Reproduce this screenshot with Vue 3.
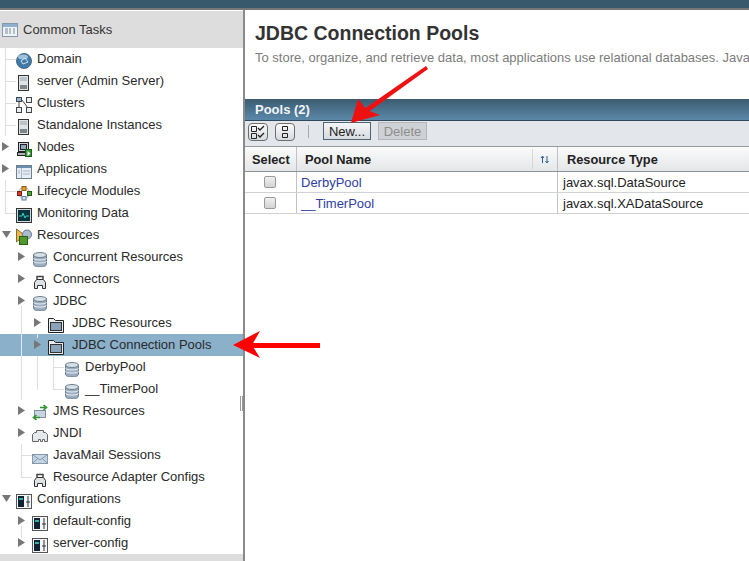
<template>
  <div class="page">
    <div class="topbar"></div>
    <div class="main">
      <aside class="side">
        <div class="side-head">
          <svg class="head-icon" width="16" height="16" viewBox="0 0 16 16"><rect x=".5" y="1.500" width="15" height="13" fill="#eef3f8" stroke="#8398ad"/><rect x="1" y="2" width="14" height="3" fill="#8fb0cf"/><path d="M3 7h3M3 9h3M3 11h3M7 7h2M7 9h2M7 11h2M11 7h2M11 9h2M11 11h2" stroke="#7e8c99"/></svg>
          <span>Common Tasks</span>
        </div>
        <div class="tree">
          <div v-for="r in rows" :key="r.t" class="row" :class="{ sel: r.sel, wide: r.i === 'folder' }">
            <i v-for="(l, i) in r.v" :key="i" class="vline" :style="{ left: l[0] + 'px', top: l[1] + 'px', height: l[2] + 'px' }"></i>
            <i v-if="r.stub !== undefined" class="hline" :style="{ left: r.stub + 'px' }"></i>
            <span class="cell" :style="{ paddingLeft: 16 * r.lv + 'px' }">
              <span class="tw">
                <svg v-if="r.a === 'r'" width="7" height="9" viewBox="0 0 7 9"><path d="M0 0l7 4.500-7 4.500z" fill="#777"/></svg>
                <svg v-if="r.a === 'd'" width="9" height="7" viewBox="0 0 9 7"><path d="M0 0h9l-4.500 7z" fill="#777"/></svg>
              </span>
              <svg class="ic" width="16" height="17" viewBox="0 0 16 17">
                <template v-if="r.i === 'globe'">
                  <circle cx="8" cy="9" r="7.500" fill="#3f7aa8"/><circle cx="8" cy="9" r="7.500" fill="none" stroke="#4b6a85"/><ellipse cx="7" cy="5" rx="5" ry="2.500" fill="#9dc0dc"/><path d="M5 9l4-3 3 4-5 2z" fill="none" stroke="#cfe0ee"/>
                </template>
                <template v-if="r.i === 'server'">
                  <rect x="2.500" y="1.500" width="10" height="15" fill="#dfe3e6" stroke="#333"/><path d="M4 4h7M4 6h7" stroke="#99a0a6"/><rect x="4" y="11" width="7" height="4" fill="#7d848a"/>
                </template>
                <template v-if="r.i === 'cluster'">
                  <g fill="#e8edf2" stroke="#444"><rect x=".5" y="1.500" width="5" height="4" fill="#8fb5d8"/><rect x="10.500" y="1.500" width="5" height="5"/><rect x=".5" y="11.500" width="5" height="5"/><rect x="10.500" y="11.500" width="5" height="5"/></g><path d="M3 6v5M6 4l6 8" stroke="#444" fill="none"/>
                </template>
                <template v-if="r.i === 'node'">
                  <rect x="2.500" y="2.500" width="10" height="9" fill="#ccd3d8" stroke="#222"/><rect x="4.500" y="4.500" width="6" height="5" fill="#8ca6bb" stroke="#222"/><rect x="1.500" y="12.500" width="9" height="3" fill="#aab2b8" stroke="#222"/><rect x="9.500" y="9.500" width="6" height="7" fill="#3d9a3d" stroke="#1c5f1c"/><path d="M11.500 11l3 2.500-3 2.500z" fill="#fff"/>
                </template>
                <template v-if="r.i === 'app'">
                  <rect x=".5" y="3.500" width="15" height="13" fill="#e6edf4" stroke="#6d7f8f"/><rect x="1" y="4" width="14" height="2" fill="#6b8fb0"/><path d="M5.500 6v10M2 9h2M2 11h2M7 9h7M7 12h7" stroke="#a5b7c7"/>
                </template>
                <template v-if="r.i === 'life'">
                  <circle cx="8" cy="9" r="5.500" fill="none" stroke="#9aa7b3"/><rect x="6" y="2.500" width="4" height="4" fill="#e8a02c" stroke="#8a5c10"/><rect x="1.500" y="7.500" width="4" height="4" fill="#d63a2a" stroke="#7c1b12"/><rect x="11.500" y="7.500" width="4" height="4" fill="#4ea03f" stroke="#25591c"/><rect x="6" y="12.500" width="4" height="3.500" fill="#cfe0ee" stroke="#5f7f9c"/>
                </template>
                <template v-if="r.i === 'mon'">
                  <rect x=".5" y="2.500" width="15" height="14" fill="#d5d9dc" stroke="#333"/><rect x="2" y="4" width="12" height="11" fill="#06343f"/><path d="M3 10h3l1-3 2 5 1-2h3" fill="none" stroke="#33d6c6"/>
                </template>
                <template v-if="r.i === 'res'">
                  <path d="M.5 1v13l8-7z" fill="#e9b64f" stroke="#8c6a20"/><circle cx="11" cy="6.500" r="4.500" fill="#a9bccd" stroke="#5f7487"/><rect x="3.500" y="8.500" width="8" height="8" fill="#4f9a2e" stroke="#2a5f15"/>
                </template>
                <template v-if="r.i === 'db'">
                  <path d="M1.500 5v9.500c0 1.300 2.900 2.300 6.500 2.300s6.500-1 6.500-2.300V5z" fill="#9badbe" stroke="#6d7f90"/><ellipse cx="8" cy="5" rx="6.500" ry="2.500" fill="#d7dfe6" stroke="#6d7f90"/><path d="M1.500 8.500c1 2 12 2 13 0M1.500 11.500c1 2 12 2 13 0" fill="none" stroke="#eef2f5"/>
                </template>
                <template v-if="r.i === 'conn'">
                  <path d="M5 7V4.500h6V7" fill="none" stroke="#444" stroke-width="1.500"/><path d="M2.500 16.500v-6l2-3h7l2 3v6h-3v-3h-5v3z" fill="#dfe3e6" stroke="#333"/>
                </template>
                <template v-if="r.i === 'folder'">
                  <path d="M.5 16.500v-14h5l2 2h8v12z" fill="#e9eef2" stroke="#222"/><rect x="2.500" y="6.500" width="11" height="8" fill="#8aa3b8" stroke="#333"/>
                </template>
                <template v-if="r.i === 'jms'">
                  <rect x="2.500" y="6.500" width="11" height="7" fill="#c9d6e2" stroke="#7f93a6"/><path d="M8 3.500h5M11.500 1l3 2.500-3 2.500" fill="none" stroke="#2e8f2e" stroke-width="1.600"/><path d="M8 13.500H3M4.500 11l-3 2.500 3 2.500" fill="none" stroke="#2e8f2e" stroke-width="1.600"/>
                </template>
                <template v-if="r.i === 'jndi'">
                  <path d="M.5 15.500v-7l2-2h2v-2h7v2h2l2 2v7h-3v-2h-2v2h-2v-2h-2v2z" fill="#e6e9ec" stroke="#666"/>
                </template>
                <template v-if="r.i === 'mail'">
                  <rect x=".5" y="6.500" width="15" height="9" fill="#c5d5e3" stroke="#8599ab"/><path d="M1 7l7 5 7-5M1 15l5-5M15 15l-5-5" fill="none" stroke="#8599ab"/>
                </template>
                <template v-if="r.i === 'cfg'">
                  <rect x=".5" y="2.500" width="15" height="14" fill="#f4f5f6" stroke="#555"/><rect x="2" y="4" width="6" height="11" fill="#123"/><rect x="3" y="6" width="4" height="2" fill="#2bb5a8"/><path d="M12 4v11M10 10h4" stroke="#333"/>
                </template>
              </svg>
              <span class="label">{{ r.t }}</span>
            </span>
          </div>
        </div>
        <div class="side-foot"></div>
        <div class="grip"></div>
      </aside>
      <main class="content">
        <h1>JDBC Connection Pools</h1>
        <p class="intro">To store, organize, and retrieve data, most applications use relational databases. Java</p>
        <section class="panel">
          <div class="panel-title">Pools (2)</div>
          <div class="toolbar">
            <button class="tb">
              <svg width="16" height="16" viewBox="0 0 16 16"><path d="M1.500 2.500h5v5h-5zM1.500 9.500h5v5h-5z" fill="none" stroke="#222"/><path d="M8 4l2 2 4-4M8 11l2 2 4-4" fill="none" stroke="#222" stroke-width="1.300"/></svg>
            </button>
            <button class="tb">
              <svg width="10" height="16" viewBox="0 0 10 16"><path d="M2.500 2.500h5v4h-5zM2.500 9.500h5v4h-5z" fill="none" stroke="#222"/></svg>
            </button>
            <span class="sep"></span>
            <button class="btn">New...</button>
            <button class="btn off">Delete</button>
          </div>
          <div class="table">
            <div class="tr thead">
              <div class="c c1 b">Select</div>
              <div class="c c2 b">
                <span>Pool Name</span>
                <span class="sort">
                  <svg width="10" height="9" viewBox="0 0 10 9"><path d="M2.500 8V2M1 3l1.500-2L4 3M7 1v6M5.500 6L7 8l1.500-2" fill="none" stroke="#2d5f94"/></svg>
                </span>
              </div>
              <div class="c c3 b">Resource Type</div>
            </div>
            <div v-for="p in pools" :key="p.n" class="tr">
              <div class="c c1 mid"><span class="check"></span></div>
              <div class="c c2 link">{{ p.n }}</div>
              <div class="c c3">{{ p.t }}</div>
            </div>
          </div>
        </section>
      </main>
    </div>
    <svg class="arrows" width="749" height="561" viewBox="0 0 749 561">
      <path d="M426 66L428 69 367 113 364 109z" fill="#ee1111"/>
      <path d="M351 123L358 99 367 110 380 115z" fill="#ee1111"/>
      <path d="M251 343H320V348H251z" fill="#ff0000"/>
      <path d="M233 345L260 331 252 345 260 358z" fill="#ff0000"/>
    </svg>
  </div>
</template>

<script setup>
const rows = [
  { t: 'Domain', lv: 0, i: 'globe', stub: 5, v: [[5, 0, 22]] },
  { t: 'server (Admin Server)', lv: 0, i: 'server', stub: 5, v: [[5, 0, 22]] },
  { t: 'Clusters', lv: 0, i: 'cluster', stub: 5, v: [[5, 0, 22]] },
  { t: 'Standalone Instances', lv: 0, i: 'server', stub: 5, v: [[5, 0, 22]] },
  { t: 'Nodes', lv: 0, i: 'node', a: 'r' },
  { t: 'Applications', lv: 0, i: 'app', a: 'r' },
  { t: 'Lifecycle Modules', lv: 0, i: 'life', stub: 5, v: [[5, 0, 22]] },
  { t: 'Monitoring Data', lv: 0, i: 'mon', stub: 5, v: [[5, 0, 12]] },
  { t: 'Resources', lv: 0, i: 'res', a: 'd' },
  { t: 'Concurrent Resources', lv: 1, i: 'db', a: 'r' },
  { t: 'Connectors', lv: 1, i: 'conn', a: 'r' },
  { t: 'JDBC', lv: 1, i: 'db', a: 'r', v: [[21, 16, 6]] },
  { t: 'JDBC Resources', lv: 2, i: 'folder', a: 'r', v: [[21, 0, 22]] },
  { t: 'JDBC Connection Pools', lv: 2, i: 'folder', a: 'r', sel: true, v: [[21, 0, 22], [37, 0, 4]] },
  { t: 'DerbyPool', lv: 3, i: 'db', stub: 53, v: [[21, 0, 22], [37, 0, 22], [53, 0, 22]] },
  { t: '__TimerPool', lv: 3, i: 'db', stub: 53, v: [[21, 0, 22], [37, 0, 12], [53, 0, 12]] },
  { t: 'JMS Resources', lv: 1, i: 'jms', a: 'r' },
  { t: 'JNDI', lv: 1, i: 'jndi', a: 'r' },
  { t: 'JavaMail Sessions', lv: 1, i: 'mail', stub: 21, v: [[21, 0, 22]] },
  { t: 'Resource Adapter Configs', lv: 1, i: 'conn', stub: 21, v: [[21, 0, 12]] },
  { t: 'Configurations', lv: 0, i: 'cfg', a: 'd' },
  { t: 'default-config', lv: 1, i: 'cfg', a: 'r', v: [[21, 16, 6]] },
  { t: 'server-config', lv: 1, i: 'cfg', a: 'r', v: [[21, 0, 6]] }
]
const pools = [
  { n: 'DerbyPool', t: 'javax.sql.DataSource' },
  { n: '__TimerPool', t: 'javax.sql.XADataSource' }
]
</script>

<style>
html, body { margin: 0; overflow: hidden; background: #fff; }
</style>

<style scoped>
.page {
  position: relative;
  width: 749px;
  height: 561px;
  overflow: hidden;
  font-family: "Liberation Sans", Arial, sans-serif;
  font-size: 13px;
  color: #222;
  background: #fff;
  display: flex;
  flex-direction: column;
}
.topbar {
  height: 8px;
  flex: none;
  background: #38586b;
  border-bottom: 2px solid #777;
}
.main { flex: 1; min-height: 0; display: flex; }
.side {
  position: relative;
  width: 243px;
  flex: none;
  border-right: 2px solid #8a8a8a;
  display: flex;
  flex-direction: column;
}
.side-head {
  height: 37px;
  margin-top: 1px;
  flex: none;
  background: #dddddd;
  display: flex;
  align-items: center;
  gap: 5px;
  padding-left: 2px;
  font-size: 13px;
  color: #333;
}
.head-icon { flex: none; }
.tree { flex: none; }
.row { position: relative; height: 22px; }
.row.sel { background: #8bb0ca; }
.vline { position: absolute; width: 1px; background: #dedede; }
.row.sel .vline { background: #dfe9f0; }
.hline { position: absolute; top: 11px; width: 11px; height: 1px; background: #dedede; }
.cell { display: flex; align-items: center; height: 22px; position: relative; }
.tw { width: 16px; flex: none; display: flex; padding-left: 2px; box-sizing: border-box; margin-bottom: 2px; }
.ic { flex: none; align-self: flex-end; margin-bottom: 1px; }
.label { margin-left: 5px; white-space: nowrap; font-size: 13px; color: #2a2a2a; margin-bottom: 2px; }
.wide .label { margin-left: 8px; }
.side-foot { flex: 1; background: #dddddd; }
.grip {
  position: absolute;
  right: 0;
  top: 386px;
  width: 1px;
  height: 15px;
  border-left: 1px solid #999;
  border-right: 1px solid #999;
}
.content { flex: 1; min-width: 0; overflow: hidden; }
h1 {
  margin: 11px 0 0 10px;
  font-size: 19.500px;
  line-height: 24px;
  color: #333;
  white-space: nowrap;
}
.intro {
  margin: 4px 0 0 10px;
  line-height: 18px;
  font-size: 13px;
  color: #7c7c7c;
  white-space: nowrap;
}
.panel { margin-top: 32px; width: 504px; }
.panel-title {
  height: 21px;
  line-height: 21px;
  padding-left: 10px;
  font-weight: bold;
  font-size: 13px;
  color: #f2f5f8;
  background: linear-gradient(#3b5c72, #5b88a8);
  border-bottom: 1px solid #2f4a5c;
}
.toolbar {
  height: 24px;
  background: #e3e6ea;
  display: flex;
  align-items: flex-start;
  padding: 1px 0 0 3px;
  gap: 7px;
  border-bottom: 1px solid #999;
}
.tb {
  width: 20px;
  height: 18px;
  margin-top: 1px;
  padding: 0;
  border: 1px solid #6d6d6d;
  border-radius: 4px;
  background: linear-gradient(#fbfbfb, #d6d9dd);
  display: flex;
  align-items: center;
  justify-content: center;
  box-sizing: border-box;
}
.sep { width: 1px; height: 13px; background: #aaa; margin: 3px 7px 0 6px; }
.btn {
  height: 18px;
  width: 48px;
  padding: 0;
  font: 13px "Liberation Sans", Arial, sans-serif;
  color: #222;
  border: 1px solid #4f6475;
  background: linear-gradient(#f4f5f6, #d8dbdf);
  box-sizing: border-box;
}
.btn.off {
  width: 49px;
  color: #8d8d8d;
  border-color: #b4b8bc;
  background: #cfd2d5;
}
.table { background: #fff; }
.tr {
  display: flex;
  height: 20px;
  border-bottom: 1px solid #cfd3d6;
  align-items: stretch;
}
.thead {
  height: 24px;
  border-bottom: 1px solid #8a9299;
  background: linear-gradient(#fbfbfb, #e4e6e8);
}
.c {
  display: flex;
  align-items: center;
  box-sizing: border-box;
  padding-left: 5px;
  border-right: 1px solid #bcc2c7;
  font-size: 13px;
  white-space: nowrap;
}
.b { font-weight: bold; color: #222; font-size: 12.800px; }
.c1 { width: 52px; flex: none; padding-left: 7px; }
.c2 { width: 261px; flex: none; padding-left: 4px; position: relative; }
.thead .c2 { padding-left: 8px; }
.c3 { flex: 1; border-right: 0; padding-left: 5px; }
.thead .c3 { padding-left: 9px; }
.mid { justify-content: center; padding: 0 2px 0 0; }
.link { color: #2f3ea3; }
.sort {
  position: absolute;
  right: 0;
  top: 2px;
  bottom: 2px;
  width: 24px;
  border-left: 1px solid #d4d7da;
  display: flex;
  align-items: center;
  justify-content: center;
}
.check {
  width: 10px;
  height: 10px;
  border: 1px solid #9a9a9a;
  border-radius: 2px;
  background: linear-gradient(#efefef, #d4d4d4);
}
.arrows { position: absolute; left: 0; top: 0; pointer-events: none; }
</style>
